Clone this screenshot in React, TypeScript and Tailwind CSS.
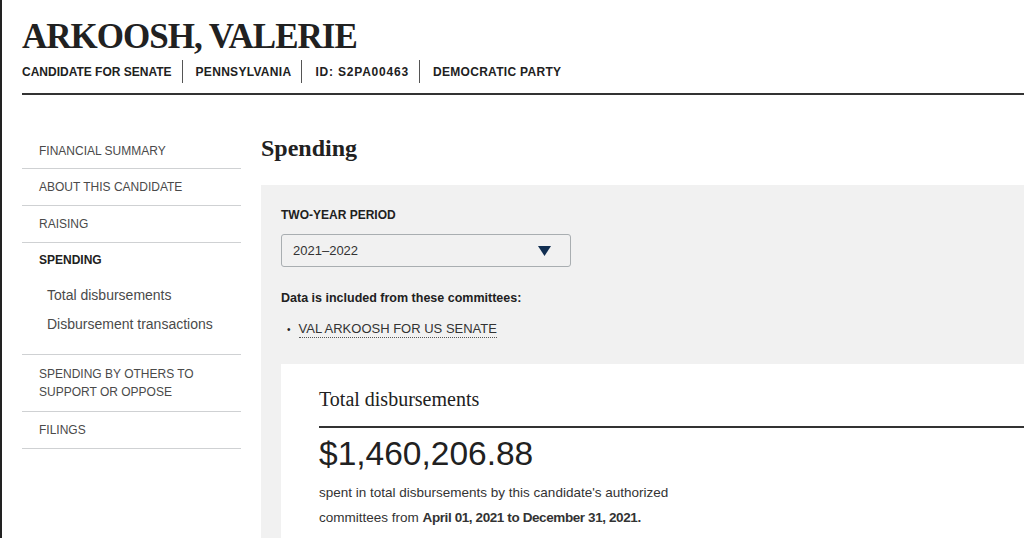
import React from 'react'

const serif = { fontFamily: '"Liberation Serif", "DejaVu Serif", serif' }
const sans = { fontFamily: '"Liberation Sans", Arial, sans-serif' }

const tags = ['CANDIDATE FOR SENATE', 'PENNSYLVANIA', 'ID: S2PA00463', 'DEMOCRATIC PARTY']

function NavItem({ label, first }: { label: string; first?: boolean }) {
  return (
    <div
      className={`${first ? 'h-[36px]' : 'h-[37px]'} flex items-center px-[17px] text-[12px] text-[#4a4a4a] border-b border-[#cfd1d3]`}
    >
      {label}
    </div>
  )
}

export default function App() {
  return (
    <div
      className="w-[1024px] h-[538px] overflow-hidden bg-white border-l-2 border-[#222] text-[#212121]"
      style={sans}
    >
      {/* Header */}
      <header className="pl-[20px]">
        <h1 className="pt-[17px] text-[35px] leading-[40px] font-bold tracking-[-1px]" style={serif}>
          ARKOOSH, VALERIE
        </h1>
        <div className="flex items-center mt-[3px] h-[23px] text-[12px] font-bold">
          {tags.map((t, i) => (
            <div
              key={t}
              className={`h-full flex items-center ${i > 0 ? 'pl-[13px] border-l border-[#555]' : ''} ${
                i < tags.length - 1 ? 'pr-[10px]' : ''
              } ${i === 2 ? 'tracking-[0.8px]' : i === 0 ? '' : 'tracking-[0.3px]'}`}
            >
              {t}
            </div>
          ))}
        </div>
        <div className="mt-[10px] border-t-2 border-[#333]" />
      </header>

      <div className="flex ml-[20px]">
        {/* Sidebar */}
        <nav className="w-[219px] shrink-0 mt-[38px]">
          <NavItem label="FINANCIAL SUMMARY" first />
          <NavItem label="ABOUT THIS CANDIDATE" />
          <NavItem label="RAISING" />
          <div className="border-b border-[#cfd1d3] pb-[15px]">
            <div className="h-[34px] flex items-center px-[17px] text-[12px] font-bold">SPENDING</div>
            <div className="pt-[4px] px-[25px] text-[14px] text-[#4a4a4a]">
              <div className="h-[29px] flex items-center">Total disbursements</div>
              <div className="h-[29px] flex items-center">Disbursement transactions</div>
            </div>
          </div>
          <div className="py-[10px] px-[17px] text-[12px] leading-[18px] text-[#4a4a4a] border-b border-[#cfd1d3]">
            SPENDING BY OTHERS TO
            <br />
            SUPPORT OR OPPOSE
          </div>
          <NavItem label="FILINGS" />
        </nav>

        {/* Main */}
        <main className="flex-1 ml-[20px] min-w-0">
          <h2 className="mt-[38px] h-[30px] leading-[30px] text-[24px] font-bold" style={serif}>
            Spending
          </h2>
          <section className="mt-[22px] bg-[#f1f1f1] pl-[20px] pt-[22px] pb-[40px]">
            <div className="text-[12px] font-bold leading-[16px]">TWO-YEAR PERIOD</div>
            <div className="mt-[11px] w-[290px] h-[33px] border border-[#a9aeb1] rounded-[3px] flex items-center justify-between pl-[11px] pr-[19px] text-[13px] text-[#333]">
              <span>2021–2022</span>
              <svg width="13" height="10" viewBox="0 0 13 10">
                <path d="M0 0 H13 L6.5 10 Z" fill="#112e51" />
              </svg>
            </div>
            <div className="mt-[23px] text-[12.5px] font-bold leading-[16px]">Data is included from these committees:</div>
            <ul className="mt-[15px] pl-[6px] text-[13px] leading-[16px]">
              <li className="flex items-center">
                <span className="mr-[8px] text-[10px]">•</span>
                <span className="border-b border-dotted border-[#555] text-[#333]">VAL ARKOOSH FOR US SENATE</span>
              </li>
            </ul>
            <div className="mt-[26px] bg-white pl-[38px] pt-[23px] pb-[20px]">
              <h3 className="text-[20px] leading-[24px]" style={serif}>
                Total disbursements
              </h3>
              <div className="mt-[15px] border-t-2 border-[#333]" />
              <div className="mt-[6px] text-[33.5px] leading-[40px] text-[#212121]">$1,460,206.88</div>
              <p className="mt-[6px] text-[13.5px] leading-[25px] text-[#333]">
                spent in total disbursements by this candidate's authorized
                <br />
                committees from <span className="font-bold tracking-[-0.4px]">April 01, 2021 to December 31, 2021.</span>
              </p>
            </div>
          </section>
        </main>
      </div>
    </div>
  )
}
